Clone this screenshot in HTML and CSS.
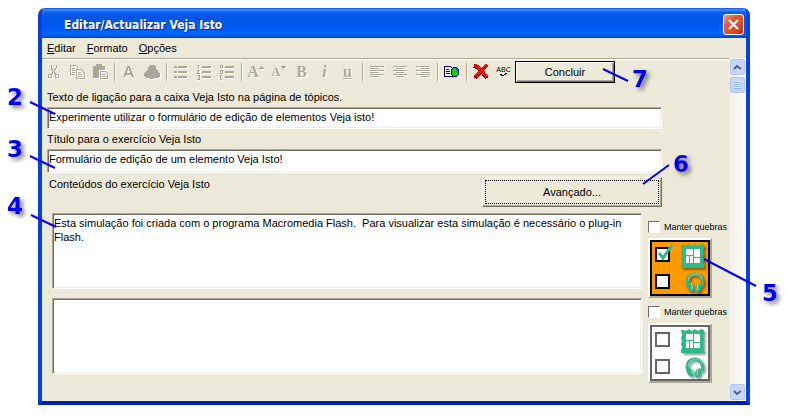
FILE: index.html
```html
<!DOCTYPE html>
<html lang="pt">

<head>
    <meta charset="UTF-8">
    <meta name="viewport" content="width=device-width, initial-scale=1.0">
    <title>Editar/Actualizar Veja Isto</title>
    <link rel="stylesheet" href="styles.css">
</head>

<body>
    <!-- shared icons -->
    <svg class="defs" aria-hidden="true">
        <symbol id="frame" viewBox="0 0 24 24">
            <path fill="#2fb98a" d="M0 1l3 0 2 1 3-2 3 2 3-2 3 2 3-2 3 1v3l-1 3 1 3-1 3 1 3-1 3 1 2v3l-3 1-3-1-3 1-3-1-3 1-3-1-3 1-2-1v-3l1-3-1-3 1-3-1-3 1-3z" />
            <path fill="#fff" d="M5 5h7v6H5zM13 5h6v8h-6zM5 12h3v7H5zM9 12h3v7H9zM13 14h6v5h-6z" />
        </symbol>
        <symbol id="phones" viewBox="0 0 20 22">
            <path fill="none" stroke="#2fb98a" stroke-width="3" d="M3 14C0 6 5 2 10 2s9 5 7 12" />
            <path fill="none" stroke="#8fdcc0" stroke-width="1" d="M3 9C4 4 7 2 11 2s5 2 6 5" />
            <ellipse cx="5" cy="15" rx="3" ry="5" transform="rotate(-25 5 15)" fill="#2fb98a" />
            <ellipse cx="13" cy="16" rx="3" ry="5" transform="rotate(20 13 16)" fill="#2fb98a" />
            <path stroke="#9fe6cc" d="M6 11l2 6M13 12l-1 6" />
        </symbol>
    </svg>

    <div class="figure">
        <div class="window">
            <div class="titlebar">
                <h1>Editar/Actualizar Veja Isto</h1>
                <button class="close" aria-label="Fechar">
                    <svg width="13" height="13"><path d="M2 2l9 9M11 2l-9 9" stroke="#fff" stroke-width="2" /></svg>
                </button>
            </div>

            <div class="menu">
                <button><u>E</u>ditar</button>
                <button><u>F</u>ormato</button>
                <button><u>O</u>pções</button>
            </div>

            <div class="main">
                <div class="content">
                    <div class="toolbar">
                        <button class="off" aria-label="Cortar"><svg width="16" height="16"><path d="M5 1v3l5 7M10 1v3l-5 7" /><circle cx="4" cy="12" r="2" /><circle cx="11" cy="12" r="2" /></svg></button>
                        <button class="off" aria-label="Copiar"><svg width="16" height="16"><path d="M6 10H1V1h5l3 3M3 4h3M3 6h3M3 8h3M7 5h5l3 3v6H7zM9 8h3M9 10h4M9 12h4" /></svg></button>
                        <button class="off" aria-label="Colar"><svg width="16" height="16"><path class="fill" d="M1 2h3V0h6v2h3v4H7v8H1z" /><path d="M8 7h5l2 2v5H8zM10 10h3M10 12h3" /></svg></button>
                        <i class="sep"></i>
                        <button class="off" aria-label="Tipo de letra"><svg width="16" height="16"><path class="thick" d="M3 13L7 3h1l4 10M5 10h6" /></svg></button>
                        <button class="off" aria-label="Cor"><svg width="16" height="16"><path class="fill" d="M6 1h4l2 2v2l2 2 2 3v2l-2 2h-4v1H6v-1H2l-2-2v-2l2-3 2-2V3z" /></svg></button>
                        <i class="sep"></i>
                        <button class="off" aria-label="Lista"><svg width="16" height="16"><path class="thick" d="M1 3h3M1 8h3M1 13h3M5 3h9M5 8h9M5 13h9" /></svg></button>
                        <button class="off" aria-label="Lista numerada"><svg width="16" height="16"><path class="thick" d="M6 3h9M6 8h9M6 13h9" /><path d="M1 1h1v3M1 6h2v1l-2 2h3M1 11h2v4H1M2 13h1" /></svg></button>
                        <button class="off" aria-label="Lista alfabética"><svg width="16" height="16"><path class="thick" d="M6 3h9M6 8h9M6 13h9" /><path d="M1 4V1h2v3M1 3h2M1 6h2v3H1zM3 11H1v4h2" /></svg></button>
                        <i class="sep"></i>
                        <button class="off" aria-label="Aumentar letra"><span class="serif">A</span><svg width="5" height="12"><path class="fill" d="M0 3l2-3 3 3z" /></svg></button>
                        <button class="off small" aria-label="Diminuir letra"><span class="serif">A</span><svg width="5" height="12"><path class="fill" d="M0 0h5L2 3z" /></svg></button>
                        <button class="off serif"><b>B</b></button>
                        <button class="off serif"><b><i>i</i></b></button>
                        <button class="off serif"><b><u>u</u></b></button>
                        <i class="sep"></i>
                        <button class="off" aria-label="Esquerda"><svg width="16" height="16"><path d="M1 2h14M1 4h9M1 6h14M1 8h9M1 10h14M1 12h9" /></svg></button>
                        <button class="off" aria-label="Centro"><svg width="16" height="16"><path d="M1 2h14M4 4h8M1 6h14M4 8h8M1 10h14M4 12h8" /></svg></button>
                        <button class="off" aria-label="Direita"><svg width="16" height="16"><path d="M1 2h14M6 4h9M1 6h14M6 8h9M1 10h14M6 12h9" /></svg></button>
                        <i class="sep"></i>
                        <button aria-label="Ligação"><svg width="17" height="16">
                            <path fill="#fff" stroke="#000080" d="M1 2h6l3 3v7H1z" /><path stroke="#000080" d="M3 5h3M3 7h4M3 9h4" />
                            <ellipse cx="12" cy="8" rx="4" ry="5" fill="#00e000" stroke="#000080" /><path fill="none" stroke="#0060e0" d="M13 4v2l2 1M13 11h2" />
                        </svg></button>
                        <i class="sep"></i>
                        <button aria-label="Eliminar"><svg width="18" height="18">
                            <path fill="none" stroke="#700" stroke-width="4" d="M2 3l3 1 6 6 4 5M15 2l-6 6-6 7" /><path fill="none" stroke="#e81010" stroke-width="3" d="M2 2l3 1 6 6 4 5M15 2l-6 6-6 6" />
                        </svg></button>
                        <button class="spell" aria-label="Ortografia"><span>ABC</span><svg width="10" height="5"><path fill="none" stroke="#000" d="M1 1l3 2 4-3" /></svg></button>
                        <button class="done">Concluir</button>
                    </div>

                    <form class="editor">
                        <label for="linkText">Texto de ligação para a caixa Veja Isto na página de tópicos.</label>
                        <input type="text" id="linkText" value="Experimente utilizar o formulário de edição de elementos Veja isto!">
                        <label for="titleText">Título para o exercício Veja Isto</label>
                        <input type="text" id="titleText" class="tall" value="Formulário de edição de um elemento Veja Isto!">
                        <div class="row">
                            <label for="body1">Conteúdos do exercício Veja Isto</label>
                            <button type="button" class="advanced">Avançado...</button>
                        </div>
                    </form>

                    <div class="block">
                        <textarea id="body1">Esta simulação foi criada com o programa Macromedia Flash.  Para visualizar esta simulação é necessário o plug-in Flash.</textarea>
                        <div class="side">
                            <label class="keep"><input type="checkbox">Manter quebras</label>
                            <div class="media active">
                                <label><input type="checkbox" aria-label="Imagem" checked><svg class="tick" width="18" height="18"><path d="M3 9l4 5L16 1" /></svg><svg class="pic" width="24" height="24"><use href="#frame" /></svg></label>
                                <label><input type="checkbox" aria-label="Som"><svg class="pic" width="20" height="22"><use href="#phones" /></svg></label>
                            </div>
                        </div>
                    </div>

                    <div class="block">
                        <textarea aria-label="Conteúdos 2"></textarea>
                        <div class="side">
                            <label class="keep"><input type="checkbox">Manter quebras</label>
                            <div class="media">
                                <label><input type="checkbox" aria-label="Imagem"><svg class="pic" width="24" height="24"><use href="#frame" /></svg></label>
                                <label><input type="checkbox" aria-label="Som"><svg class="pic" width="20" height="22"><use href="#phones" /></svg></label>
                            </div>
                        </div>
                    </div>
                </div>

                <div class="scrollbar">
                    <button aria-label="Subir"><svg width="9" height="7"><path d="M1 5l3-3 4 3" /></svg></button>
                    <div class="thumb"></div>
                    <button class="down" aria-label="Descer"><svg width="9" height="7"><path d="M1 2l3 3 4-3" /></svg></button>
                </div>
            </div>
        </div>

        <!-- callouts -->
        <svg class="callouts">
            <path d="M30 102l25 12M30 156l25 12M31 215l25 12M704 259l52 27M643 184l26-19M603 69l25 12" />
            <text x="7" y="105">2</text>
            <text x="7" y="157">3</text>
            <text x="7" y="214">4</text>
            <text x="762" y="301">5</text>
            <text x="673" y="172">6</text>
            <text x="632" y="87">7</text>
        </svg>
    </div>
</body>

</html>
```
FILE: styles.css
```css
* {
    box-sizing: border-box;
}

body {
    margin: 0;
    background-color: #fff;
    font-family: "Liberation Sans", Arial, sans-serif;
    font-size: 11px;
    color: #000;
}

button,
input,
textarea {
    font: inherit;
    color: inherit;
    border-radius: 0;
    margin: 0;
}

button {
    background: none;
    border: none;
    padding: 0;
}

.defs {
    display: none;
}

.figure {
    position: relative;
    padding: 8px 42px 14px 38px;
}

.window {
    background-color: #ece9d8;
    border: 4px solid #0540e0;
    border-color: #0540e0 #0540e0 #0020b0 #0540e0;
    border-top: none;
    border-radius: 7px 7px 0 0;
    overflow: hidden;
}

/* title bar */
.titlebar {
    display: flex;
    align-items: center;
    justify-content: space-between;
    height: 30px;
    margin: 0 -4px;
    padding: 3px 6px 0 26px;
    background: linear-gradient(#0a50d8 0, #3a94ff 6%, #0a5ee8 14%, #0054e3 35%, #0058ee 60%, #0066ff 85%, #0058e6 93%, #0040c8 100%);
}

h1 {
    margin: 0;
    font-family: "DejaVu Sans Condensed", "Open Sans", sans-serif;
    font-size: 12px;
    color: #fff;
    text-shadow: 1px 1px #0a2a90;
}

.close {
    display: flex;
    align-items: center;
    justify-content: center;
    width: 21px;
    height: 21px;
    border: 1px solid #fff;
    border-radius: 3px;
    background: linear-gradient(135deg, #f0a088, #e35a33 35%, #dc4a20 70%, #b83000);
}

/* menu */
.menu {
    display: flex;
    gap: 11px;
    height: 20px;
    padding: 0 5px;
}

.main {
    display: flex;
}

.content {
    flex: 1;
    min-width: 0;
    padding-bottom: 18px;
    border-top: 1px solid #aca899;
    box-shadow: inset 0 1px #fff;
}

/* toolbar */
.toolbar {
    display: flex;
    align-items: center;
    height: 25px;
    padding-top: 1px;
}

.toolbar button {
    display: flex;
    align-items: center;
    justify-content: center;
    width: 23px;
    height: 22px;
}

.toolbar svg {
    flex: none;
    shape-rendering: crispEdges;
}

.off {
    color: #aca899;
    filter: drop-shadow(1px 1px 0 #fff);
}

.off path,
.off circle {
    fill: none;
    stroke: #aca899;
}

.off .thick {
    stroke-width: 2;
}

.off .fill {
    fill: #aca899;
    stroke: none;
}

.serif {
    font-family: "Liberation Serif", serif;
    font-size: 16px;
    font-weight: bold;
}

.small .serif {
    font-size: 13px;
}

.sep {
    width: 2px;
    height: 18px;
    margin: 0 1px 0 3px;
    border-left: 1px solid #aca899;
    border-right: 1px solid #fff;
}

.toolbar .spell {
    flex-direction: column;
    font-size: 7px;
    line-height: 7px;
}

.toolbar .done {
    width: 100px;
    border: 1px solid #000;
    box-shadow: inset 1px 1px #fff, inset -1px -1px #716f64, inset -2px -2px #aca899;
}

/* form */
.editor {
    display: flex;
    flex-direction: column;
    padding: 3px 67px 6px 5px;
}

.editor label {
    line-height: 20px;
}

input[type=text],
textarea {
    background-color: #fff;
    border: 1px solid;
    border-color: #aca899 #fff #fff #aca899;
    box-shadow: inset 1px 1px #716f64, inset -1px -1px #f1efe2;
    outline: none;
}

input[type=text] {
    height: 22px;
    padding: 0 1px 2px;
}

input.tall {
    height: 24px;
    padding-bottom: 4px;
}

.row {
    display: flex;
    justify-content: space-between;
    padding: 4px 0 0 2px;
}

.row label {
    line-height: 15px;
}

.advanced {
    width: 180px;
    height: 30px;
    border: 1px solid;
    border-color: #fff #716f64 #716f64 #fff;
    box-shadow: inset -1px -1px #aca899;
    outline: 1px dotted #000;
    outline-offset: -4px;
}

/* content blocks */
.block {
    display: flex;
    align-items: flex-start;
    gap: 6px;
    padding: 0 2px 0 10px;
}

textarea {
    flex: 1;
    min-width: 0;
    height: 76px;
    padding: 2px 1px 0;
    line-height: 14px;
    resize: none;
}

.side {
    width: 79px;
    padding-top: 7px;
}

.keep {
    display: flex;
    align-items: center;
    gap: 4px;
    height: 13px;
    font-size: 9px;
    white-space: nowrap;
}

.keep input {
    appearance: none;
    width: 12px;
    height: 12px;
    background-color: #fff;
    border: 1px solid;
    border-color: #716f64 #fff #fff #716f64;
}

.media {
    width: 64px;
    height: 60px;
    margin-top: 5px;
    border: 2px solid;
    border-color: #fff #aca899 #aca899 #fff;
    background-color: #fff;
    outline: 2px solid #666;
    outline-offset: -4px;
    color: #666;
    padding: 1px 5px;
}

.media.active {
    background-color: #ff9900;
    outline-color: #000;
    color: #000;
}

.media label {
    position: relative;
    display: flex;
    align-items: center;
    justify-content: space-between;
    height: 27px;
}

.media input {
    appearance: none;
    width: 15px;
    height: 15px;
    border: 2px solid;
    background-color: #fff;
}

.pic {
    margin-top: 2px;
    filter: drop-shadow(2px 2px 1px rgba(0, 0, 0, 0.4));
}

.tick {
    position: absolute;
    left: 1px;
    top: 3px;
    fill: none;
    stroke: #2fb98a;
    stroke-width: 3;
}

/* scrollbar */
.scrollbar {
    display: flex;
    flex-direction: column;
    width: 17px;
    background: linear-gradient(90deg, #f0efe8, #fefefb);
}

.scrollbar button,
.thumb {
    width: 15px;
    height: 16px;
    margin: 1px;
    border: 1px solid #b0c6f4;
    border-radius: 2px;
    background-color: #c6d6fc;
}

.thumb {
    padding: 3px;
    background: repeating-linear-gradient(#eef4fe 0 1px, #8cb0f8 1px 2px) content-box, #c6d6fc;
}

.scrollbar .down {
    margin-top: auto;
}

.scrollbar path {
    fill: none;
    stroke: #4d6185;
    stroke-width: 2;
}

/* callouts */
.callouts {
    position: absolute;
    left: 0;
    top: 0;
    width: 100%;
    height: 100%;
    pointer-events: none;
    fill: #00f;
    font-family: "DejaVu Sans", Verdana, sans-serif;
    font-size: 23px;
    font-weight: bold;
}

.callouts path {
    stroke: #00f;
    stroke-width: 2;
}

.callouts text {
    filter: drop-shadow(3px 3px 2px rgba(0, 0, 0, 0.5));
}
```
